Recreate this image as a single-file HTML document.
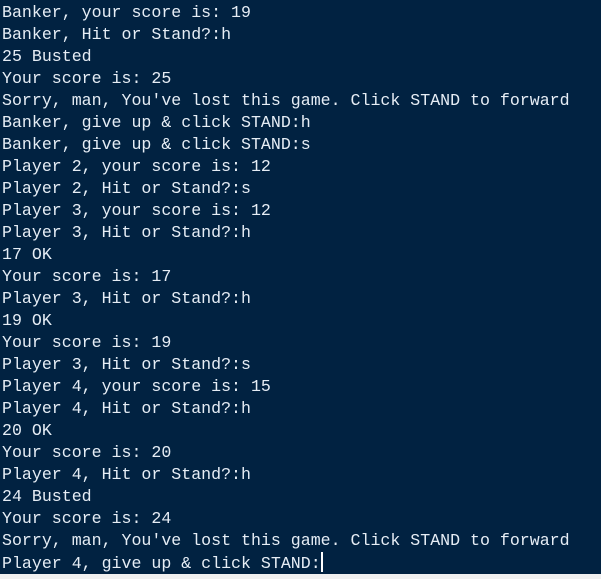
<!DOCTYPE html>
<html><head><style>
html,body{margin:0;padding:0;width:601px;height:579px;overflow:hidden;background:#f0f0f0}
#t{position:absolute;left:0;top:0;width:601px;height:574px;background:#012241;}
pre{margin:0;position:absolute;left:2px;top:2px;font-family:"Liberation Mono",monospace;font-size:16.6px;line-height:22px;color:#e6edf5;}
.c{display:inline-block;width:2px;height:20px;background:#fff;vertical-align:-4px;}
</style></head><body><div id="t"><pre>Banker, your score is: 19
Banker, Hit or Stand?:h
25 Busted
Your score is: 25
Sorry, man, You've lost this game. Click STAND to forward
Banker, give up &amp; click STAND:h
Banker, give up &amp; click STAND:s
Player 2, your score is: 12
Player 2, Hit or Stand?:s
Player 3, your score is: 12
Player 3, Hit or Stand?:h
17 OK
Your score is: 17
Player 3, Hit or Stand?:h
19 OK
Your score is: 19
Player 3, Hit or Stand?:s
Player 4, your score is: 15
Player 4, Hit or Stand?:h
20 OK
Your score is: 20
Player 4, Hit or Stand?:h
24 Busted
Your score is: 24
Sorry, man, You've lost this game. Click STAND to forward
Player 4, give up &amp; click STAND:<span class="c"></span></pre></div></body></html>
